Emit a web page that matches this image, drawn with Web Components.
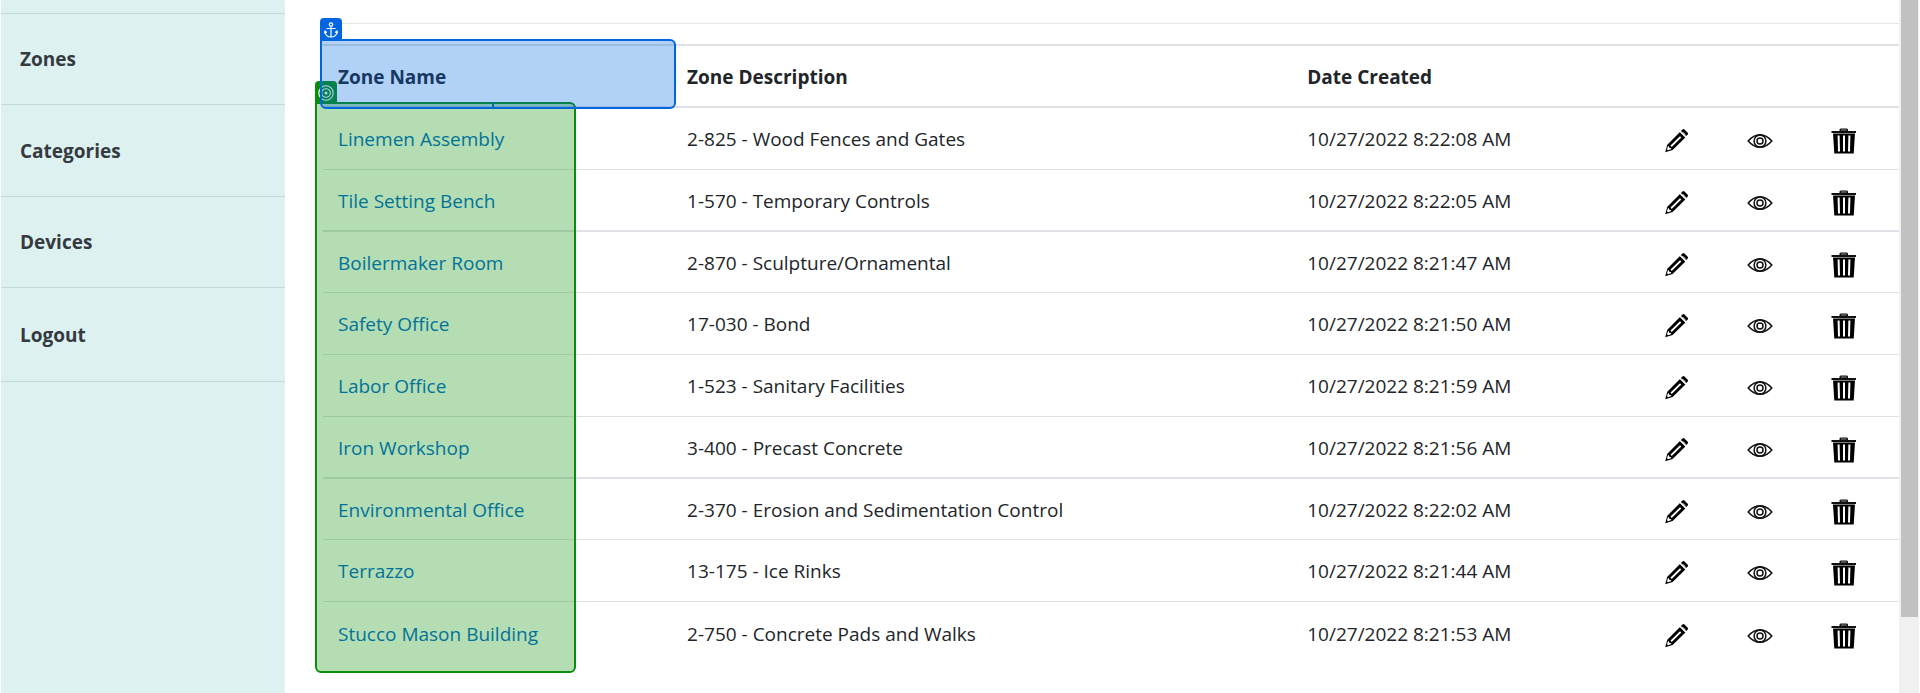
<!DOCTYPE html>
<html lang="en">
<head>
<meta charset="utf-8">
<title>Zones</title>
<style>
  body { margin: 0; background: #fff; color: #212529; font: 19px/28px "Open Sans", "Segoe UI", sans-serif; }
</style>
</head>
<body>
<zone-app></zone-app>
<script>
const define = (name, html, setup) => customElements.define(name, class extends HTMLElement {
  connectedCallback() {
    if (this.shadowRoot) return;
    const t = document.createElement('template');
    t.innerHTML = html;
    this.attachShadow({ mode: 'open' }).append(t.content.cloneNode(true));
    if (setup) setup(this, this.shadowRoot);
  }
});

const ICONS = {
  pencil: `<svg viewBox="0 0 26 26" width="26" height="26"><path d="M2.2 24.300 4.300 16.700 17 4l5.400 5.400L9.600 22z" fill="#000"/><path d="M17.900 3.100 19.600 1.400q.9-.8 1.800 0l3.300 3.300q.8.9 0 1.800L23.200 8z" fill="#000"/><path d="M17 3.600l5.600 5.500M19.700 4.200l2.500 2.500" stroke="#fff" stroke-width="1"/><path d="M7.500 17.600 17 8.200l1.300 1.300-9.600 9.500z" fill="#fff"/><path d="M4.900 18.400l.8-.5.6 1.900 2 .5-.5.9-2.800 1-1-.9z" fill="#fff"/></svg>`,
  eye: `<svg viewBox="0 0 26 26" width="26" height="26" fill="none" stroke="#111" stroke-width="1.500"><path d="M1.200 13Q6.500 6.700 13 6.700T24.800 13Q19.500 19.300 13 19.300T1.200 13z"/><circle cx="13" cy="13" r="5.900"/><circle cx="13" cy="13" r="3"/></svg>`,
  trash: `<svg viewBox="0 0 26 26" width="26" height="26"><path d="M8.500 3V1.500Q8.800.500 10 .500h5.500q1.200 0 1.500 1V3h8v2H.500V3z" fill="#111"/><path d="M10 2h5.500" stroke="#888"/><path d="M2 5.500h22L22.700 25.500H3.300z" fill="#000"/><path d="M7.600 7.500l.4 16M13 7.500v16M18.400 7.500l-.4 16" stroke="#fff" stroke-width="2"/></svg>`,
  anchor: `<svg viewBox="0 0 16 16" width="16" height="16" fill="none" stroke="#fff" stroke-width="1.200"><circle cx="8" cy="2.500" r="1.700"/><path d="M8 4.200V15M3.500 6.500h9M2 9.500Q2.500 15 8 15t6-5.500M1.500 11.500 2 9l1.800 1.500M14.500 11.500 14 9l-1.800 1.500"/></svg>`,
  target: `<svg viewBox="0 0 16 16" width="16" height="16" fill="none" stroke="#fff" stroke-width="1.100"><circle cx="8" cy="8" r="7.200"/><circle cx="8" cy="8" r="4.300"/><circle cx="8" cy="8" r="1.500" fill="#fff" stroke="none"/></svg>`
};

define('ui-icon', `<style>:host{display:block} svg{display:block}</style>`, (el, root) => {
  const t = document.createElement('template');
  t.innerHTML = ICONS[el.getAttribute('name')];
  root.append(t.content);
});

define('nav-item', `
<style>
  :host { display: flex; align-items: center; box-sizing: border-box; height: 91px; border-bottom: 1px solid #c3d8d7; }
  :host(:nth-child(2)) { height: 92px; }
  :host(:last-child) { height: 94px; }
  a { padding-left: 19px; color: #343a40; font-weight: 700; text-decoration: none; }
</style>
<a href="#"><slot></slot></a>`);

define('side-nav', `
<style>
  :host { display: flow-root; flex: none; width: 284px; margin-left: 1px; background: #ddf1f0; }
  nav { border-top: 1px solid #c3d8d7; margin-top: 13px; }
</style>
<nav aria-label="Main">
  <nav-item>Zones</nav-item><nav-item>Categories</nav-item><nav-item>Devices</nav-item><nav-item>Logout</nav-item>
</nav>`);

define('pick-region', `
<style>
  :host { --c: #0066e0; --f: rgba(0,102,224,.3); position: absolute; box-sizing: border-box;
    border: 2px solid var(--c); border-radius: 6px; border-top-left-radius: 0; background: var(--f); pointer-events: none; }
  :host([kind=target]) { --c: #088e0c; --f: rgba(8,142,8,.3); }
  .tag { position: absolute; left: -2px; bottom: 100%; display: grid; place-items: center;
    width: 22px; height: 23px; border-radius: 4px 4px 0 0; background: var(--c); }
</style>
<span class="tag"><ui-icon></ui-icon></span>`, (el, root) => {
  const icon = document.createElement('ui-icon');
  icon.setAttribute('name', el.getAttribute('kind'));
  root.querySelector('ui-icon').replaceWith(icon);
});

const ZONES = [
  ['Linemen Assembly', '2-825 - Wood Fences and Gates', '08', '22'],
  ['Tile Setting Bench', '1-570 - Temporary Controls', '05', '22'],
  ['Boilermaker Room', '2-870 - Sculpture/Ornamental', '47', '21'],
  ['Safety Office', '17-030 - Bond', '50', '21'],
  ['Labor Office', '1-523 - Sanitary Facilities', '59', '21'],
  ['Iron Workshop', '3-400 - Precast Concrete', '56', '21'],
  ['Environmental Office', '2-370 - Erosion and Sedimentation Control', '02', '22'],
  ['Terrazzo', '13-175 - Ice Rinks', '44', '21'],
  ['Stucco Mason Building', '2-750 - Concrete Pads and Walks', '53', '21']
];

define('zone-table', `
<style>
  :host { display: block; position: relative; }
  table { width: 100%; table-layout: fixed; border-collapse: separate; border-spacing: 0; }
  .name { width: 22.15%; } .desc { width: 39.35%; } .act { width: 84px; }
  th, td { box-sizing: border-box; height: 62px; padding: 1px 0 0 15px; text-align: left; vertical-align: middle;
    border-bottom: 1px solid #dee2e6; white-space: nowrap; }
  th { height: 64px; padding-top: 2px; border-top: 2px solid #dee2e6; border-bottom-width: 2px; font-weight: 700; }
  tr:nth-child(4n+2) td { border-bottom-width: 2px; }
  tr:nth-child(4n+3) td { height: 61px; }
  tbody tr:last-child td { border-bottom: 0; }
  a { color: #0366d6; text-decoration: none; }
  td:has(button) { padding-left: 16px; }
  button { display: block; padding: 0; margin-top: 4px; border: 0; background: none; cursor: pointer; }
  pick-region[kind=anchor] { left: -3px; top: -5px; width: calc(22.15% + 7px); height: 70px; }
  pick-region[kind=target] { left: -8px; top: 58px; width: 261px; bottom: -9px; }
  .link { position: absolute; left: 169px; top: 58px; width: 2px; height: 7px; background: #0a6aa8; }
</style>
<table>
  <colgroup><col class="name"><col class="desc"><col><col class="act"><col class="act"><col class="act"></colgroup>
  <thead><tr><th>Zone Name</th><th>Zone Description</th><th>Date Created</th><th></th><th></th><th></th></tr></thead>
  <tbody></tbody>
</table>
<pick-region kind="target"></pick-region>
<pick-region kind="anchor"></pick-region>
<span class="link"></span>`, (el, root) => {
  const action = (icon, label) => `<td><button type="button" aria-label="${label}"><ui-icon name="${icon}"></ui-icon></button></td>`;
  root.querySelector('tbody').innerHTML = ZONES.map(([name, desc, s, m]) => `<tr>
    <td><a href="#">${name}</a></td><td>${desc}</td><td>10/27/2022 8:${m}:${s} AM</td>
    ${action('pencil', 'Edit')}${action('eye', 'View')}${action('trash', 'Delete')}</tr>`).join('');
});

define('scroll-rail', `
<style>
  :host { display: block; flex: none; width: 20px; background: #f0f0f0; }
  div { width: 17px; height: 89%; margin-left: 2px; background: #c1c1c1; }
</style><div></div>`);

define('zone-app', `
<style>
  :host { display: flex; min-height: 100vh; }
  main { flex: 1; min-width: 0; padding: 23px 0 20px 38px; }
  hr { margin: 0 0 20px; border: 0; border-top: 1px solid #e3e5e6; }
  scroll-rail { height: 100vh; margin-right: 1px; }
</style>
<side-nav></side-nav>
<main><hr><zone-table></zone-table></main>
<scroll-rail></scroll-rail>`);
</script>
</body>
</html>
